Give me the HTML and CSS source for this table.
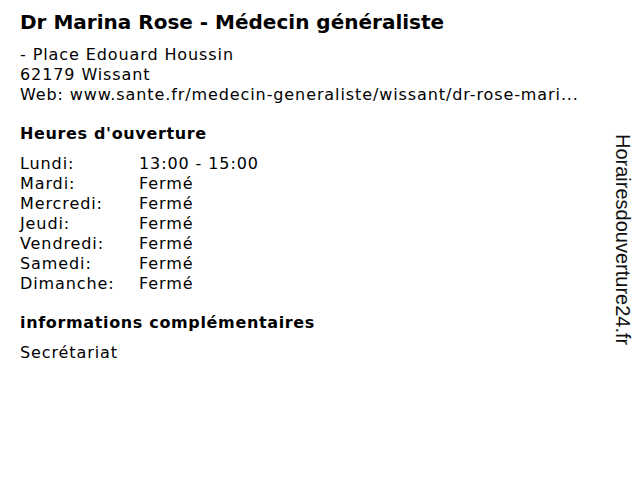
FILE: index.html
```html
<!DOCTYPE html>
<html lang="fr">
<head>
<meta charset="utf-8">
<link rel="stylesheet" href="styles.css">
</head>
<body>
<div class="page">
  <main class="content">
    <h1 class="title">Dr Marina Rose - Médecin généraliste</h1>
    <div class="address">
      <div>- Place Edouard Houssin</div>
      <div>62179 Wissant</div>
      <div>Web: www.sante.fr/medecin-generaliste/wissant/dr-rose-mari...</div>
    </div>
    <h2 class="section">Heures d'ouverture</h2>
    <div class="hours">
      <span>Lundi:</span><span>13:00 - 15:00</span>
      <span>Mardi:</span><span>Fermé</span>
      <span>Mercredi:</span><span>Fermé</span>
      <span>Jeudi:</span><span>Fermé</span>
      <span>Vendredi:</span><span>Fermé</span>
      <span>Samedi:</span><span>Fermé</span>
      <span>Dimanche:</span><span>Fermé</span>
    </div>
    <h2 class="section">informations complémentaires</h2>
    <div class="extra">Secrétariat</div>
  </main>
  <aside class="brand"><span class="brand-text">Horairesdouverture24.fr</span></aside>
</div>
</body>
</html>
```
FILE: styles.css
```css
html, body {
  margin: 0;
  padding: 0;
  background: #fff;
}
body {
  font-family: "DejaVu Sans", sans-serif;
  color: #000;
  width: 640px;
  height: 480px;
}
.page {
  display: flex;
  justify-content: space-between;
}
.content {
  padding: 8px 0 0 20px;
}
.title {
  margin: 0;
  font-size: 20px;
  font-weight: bold;
  line-height: 28px;
}
.address {
  margin-top: 9px;
  font-size: 16px;
  line-height: 20px;
  letter-spacing: 0.9px;
}
.section {
  margin: 19px 0 10px;
  font-size: 16px;
  font-weight: bold;
  line-height: 20px;
  letter-spacing: 0.65px;
}
.hours {
  display: grid;
  grid-template-columns: 119px auto;
  font-size: 16px;
  line-height: 20px;
  letter-spacing: 0.9px;
}
.extra {
  margin-top: 1px;
  font-size: 16px;
  line-height: 20px;
  letter-spacing: 0.9px;
}
.brand {
  width: 34px;
  padding-top: 134px;
  display: flex;
  justify-content: center;
}
.brand-text {
  writing-mode: vertical-rl;
  font-family: "Liberation Sans", Arial, sans-serif;
  font-size: 20px;
  line-height: 22px;
  color: #111;
}
```
